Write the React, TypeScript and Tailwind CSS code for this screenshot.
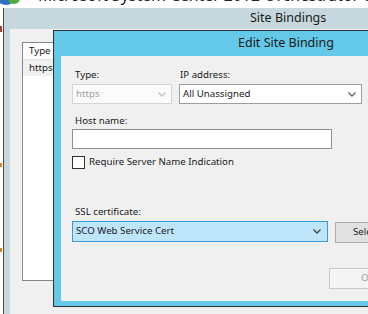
import React from "react";

const font = { fontFamily: '"Noto Sans", "Open Sans", sans-serif' };

function Chevron({ color = "#606060" }: { color?: string }) {
  return (
    <svg width="8" height="5" viewBox="0 0 8 5" className="shrink-0">
      <polyline points="0.5,0.5 4,4 7.5,0.5" fill="none" stroke={color} strokeWidth="1.3" />
    </svg>
  );
}

function EditSiteBinding() {
  return (
    <div className="absolute left-[53px] top-[30px] flex h-[277px] w-[420px] flex-col border border-[#2f2f2f] bg-[#64c8e8]">
      {/* title bar */}
      <div className="flex h-[25px] shrink-0 items-center pl-[184px] text-[12.5px] text-[#1a1a1a]">
        Edit Site Binding
      </div>

      {/* body */}
      <div className="mb-[5px] ml-[7px] flex flex-1 flex-col bg-[#f0f0f0] pl-[11px] pt-[12px] text-[9.7px] text-[#1a1a1a]">
        <div className="flex gap-[7px]">
          <div className="flex w-[100px] shrink-0 flex-col">
            <div className="ml-[3px] h-[14px] leading-[14px]">Type:</div>
            <div className="mt-[2px] flex h-[20px] items-center justify-between border border-[#d5d5d5] bg-[#fbfbfb] pl-[3px] pr-[5px] text-[#a3a3a3]">
              <span>https</span>
              <Chevron color="#c0c0c0" />
            </div>
          </div>
          <div className="flex w-[183px] shrink-0 flex-col">
            <div className="ml-[1px] h-[14px] leading-[14px]">IP address:</div>
            <div className="mt-[2px] flex h-[20px] items-center justify-between border border-[#9e9e9e] bg-white pl-[3px] pr-[5px]">
              <span>All Unassigned</span>
              <Chevron />
            </div>
          </div>
        </div>

        <div className="ml-[3px] mt-[10px] h-[14px] leading-[14px]">Host name:</div>
        <div className="mt-[1px] h-[20px] w-[260px] border border-[#8f8f8f] bg-white" />

        <div className="mt-[7px] flex h-[13px] items-center gap-[4px]">
          <div className="h-[13px] w-[13px] shrink-0 border border-[#333333] bg-white" />
          <span>Require Server Name Indication</span>
        </div>

        <div className="ml-[3px] mt-[36px] h-[14px] leading-[14px]">SSL certificate:</div>
        <div className="mt-[2px] flex items-start gap-[7px]">
          <div className="flex h-[21px] w-[256px] shrink-0 items-center justify-between border border-[#3d9ad6] bg-[#bfe5fb] pl-[3px] pr-[6px]">
            <span>SCO Web Service Cert</span>
            <Chevron color="#404040" />
          </div>
          <div className="mt-[1px] flex h-[21px] w-[75px] shrink-0 items-center border border-[#adadad] bg-[#e1e1e1] pl-[17px]">
            Select...
          </div>
        </div>

        <div className="ml-[257px] mt-[25px] flex h-[21px] w-[75px] shrink-0 items-center border border-[#c9c9c9] bg-[#f4f4f4] pl-[31px] text-[#a0a0a0]">
          OK
        </div>
      </div>
    </div>
  );
}

export default function App() {
  return (
    <div style={font} className="relative flex h-[314px] w-[368px] flex-col overflow-hidden bg-white">
      {/* background app title, mostly cut off */}
      <div className="relative flex h-[8px] shrink-0 overflow-hidden">
        <svg width="20" height="8" viewBox="0 0 20 8" className="shrink-0">
          <ellipse cx="6" cy="-2" rx="9" ry="7" fill="#2f6fc4" />
          <ellipse cx="14" cy="-2" rx="6" ry="6" fill="#4fae3b" />
        </svg>
        <div className="ml-[18px] mt-[-16px] whitespace-nowrap text-[15.8px] leading-[22px] text-[#222]">
          Microsoft System Center 2012 Orchestrator Web Service
        </div>
      </div>

      {/* left page bits */}
      <div className="absolute left-0 top-[26px] h-[6px] w-[2px] bg-[#b03a2e]" />
      <div className="absolute left-0 top-[163px] h-[4px] w-[2px] bg-[#d9822b]" />
      <div className="absolute left-0 top-[248px] h-[4px] w-[2px] bg-[#d9822b]" />

      {/* Site Bindings window */}
      <div className="ml-[3px] flex flex-1 flex-col border-l border-[#4a4a4a] bg-[#c6d7dd]">
        <div className="flex h-[21px] shrink-0 items-center pl-[246px] text-[12.5px] text-[#1a1a1a]">
          Site Bindings
        </div>
        <div className="ml-[6px] flex-1 bg-[#f0f0f0] pl-[12px] pt-[13px] text-[9.7px] text-[#1a1a1a]">
          <div className="h-[239px] w-[200px] border border-[#828790] bg-white">
            <div className="flex h-[17px] items-center border-b border-[#e5e5e5] pl-[6px]">Type</div>
            <div className="flex h-[16px] items-center bg-[#f0f0f0] pl-[6px]">https</div>
          </div>
        </div>
      </div>

      <EditSiteBinding />
    </div>
  );
}
